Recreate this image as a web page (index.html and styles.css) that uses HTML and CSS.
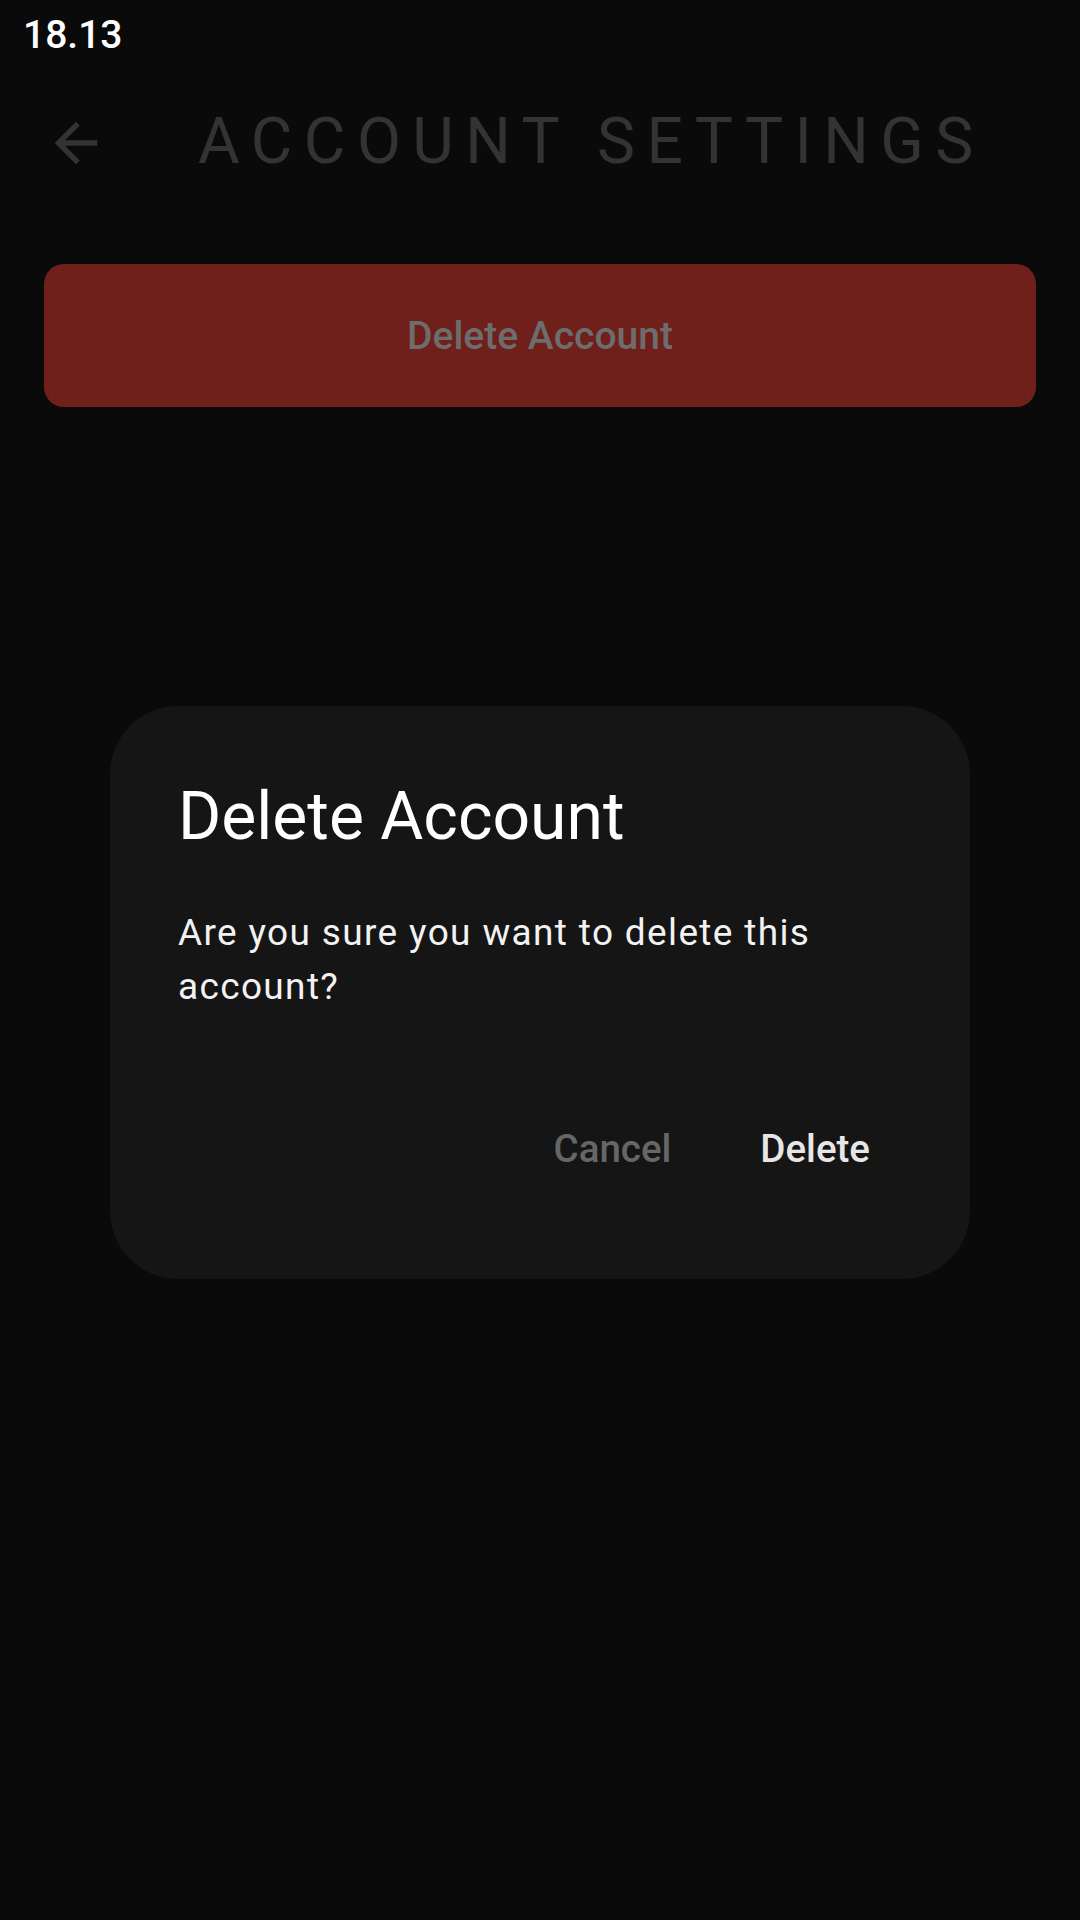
FILE: index.html
```html
<!DOCTYPE html>
<html lang="en">
<head>
<meta charset="utf-8">
<title>Account Settings</title>
<link rel="stylesheet" href="styles.css">
</head>
<body>
<div class="screen">
  <div class="status-bar">18.13</div>
  <header class="app-bar">
    <svg class="back-icon" viewBox="0 0 24 24" aria-hidden="true">
      <path d="M20 11H7.83l5.59-5.59L12 4l-8 8 8 8 1.41-1.41L7.83 13H20v-2z"/>
    </svg>
    <h1 class="app-title">ACCOUNT SETTINGS</h1>
  </header>
  <main class="content">
    <button class="danger-button">Delete Account</button>
  </main>

  <div class="dialog" role="dialog">
    <h2 class="dialog-title">Delete Account</h2>
    <p class="dialog-text">Are you sure you want to delete this account?</p>
    <div class="dialog-actions">
      <button class="text-button muted">Cancel</button>
      <button class="text-button strong">Delete</button>
    </div>
  </div>
</div>
</body>
</html>
```
FILE: styles.css
```css
html, body {
  margin: 0;
  padding: 0;
  background: #0a0a0a;
}
body {
  font-family: Roboto, "Noto Sans", sans-serif;
}
.screen {
  position: relative;
  width: 1080px;
  height: 1920px;
  background: #0a0a0a;
  overflow: hidden;
}
.status-bar {
  height: 70px;
  line-height: 70px;
  padding-left: 23px;
  font-size: 39px;
  font-weight: 500;
  color: #ffffff;
}
.app-bar {
  height: 146px;
  display: flex;
  align-items: center;
  padding-left: 44px;
}
.back-icon {
  width: 64px;
  height: 64px;
  fill: #333333;
  flex: none;
}
.app-title {
  margin: 0 0 4px 90px;
  font-size: 64px;
  font-weight: 400;
  letter-spacing: 11.4px;
  color: #333333;
  white-space: nowrap;
}
.content {
  padding: 48px 44px 0;
}
.danger-button {
  display: block;
  width: 100%;
  height: 143px;
  border: none;
  border-radius: 20px;
  background: #6f201b;
  color: #6d6d6d;
  font-family: Roboto, sans-serif;
  font-size: 39px;
  font-weight: 500;
  padding: 0;
}
.dialog {
  position: absolute;
  left: 110px;
  top: 706px;
  width: 860px;
  box-sizing: border-box;
  padding: 71px 68px 76px;
  background: #151515;
  border-radius: 68px;
}
.dialog-title {
  margin: 0;
  font-size: 66px;
  line-height: 80px;
  font-weight: 400;
  color: #ffffff;
}
.dialog-text {
  margin: 49px 0 0;
  font-size: 37px;
  line-height: 54px;
  letter-spacing: 1.35px;
  color: #f2f2f2;
}
.dialog-actions {
  margin-top: 79px;
  display: flex;
  justify-content: flex-end;
  gap: 25px;
}
.text-button {
  height: 110px;
  padding: 0 32px;
  border: none;
  background: transparent;
  font-family: Roboto, sans-serif;
  font-size: 38.5px;
  font-weight: 500;
}
.text-button.muted {
  color: #666666;
}
.text-button.strong {
  color: #e6e6e6;
}
```
